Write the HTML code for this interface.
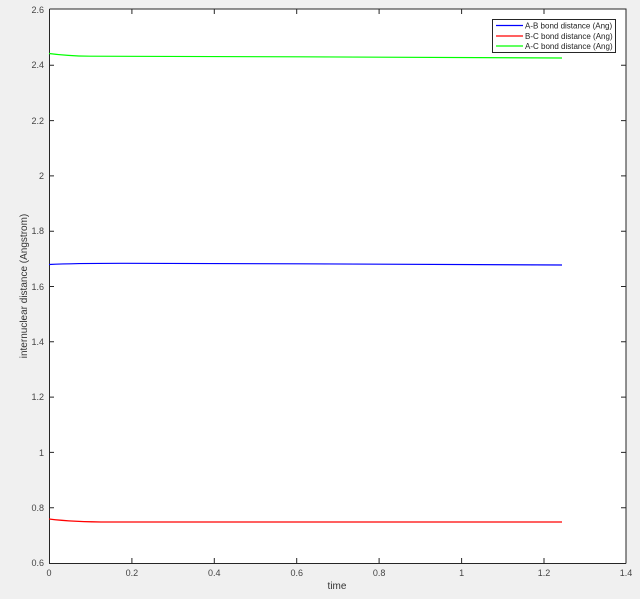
<!DOCTYPE html>
<html><head><style>body{margin:0;background:#f0f0f0;}svg{display:block;font-family:"Liberation Sans",sans-serif;}</style></head>
<body>
<svg width="640" height="599" viewBox="0 0 640 599">
<rect x="0" y="0" width="640" height="599" fill="#f0f0f0"/>
<rect x="49" y="9" width="577" height="554" fill="#fff"/>
<g stroke="#262626" stroke-width="1" fill="none">
<path d="M49.5 9v554.5H626M49.5 9H626V563.5"/>
<path d="M131.9 563v-5M214.3 563v-5M296.7 563v-5M379.1 563v-5M461.6 563v-5M544 563v-5
M131.9 9v5M214.3 9v5M296.7 9v5M379.1 9v5M461.6 9v5M544 9v5
M49 507.7h5M49 452.4h5M49 397.1h5M49 341.8h5M49 286.5h5M49 231.2h5M49 175.9h5M49 120.6h5M49 65.3h5
M626 507.7h-5M626 452.4h-5M626 397.1h-5M626 341.8h-5M626 286.5h-5M626 231.2h-5M626 175.9h-5M626 120.6h-5M626 65.3h-5"/>
</g>
<g font-size="9" fill="#444" text-anchor="end">
<text x="44" y="566">0.6</text><text x="44" y="511">0.8</text><text x="44" y="456">1</text>
<text x="44" y="400">1.2</text><text x="44" y="345">1.4</text><text x="44" y="290">1.6</text>
<text x="44" y="234">1.8</text><text x="44" y="179">2</text><text x="44" y="124">2.2</text>
<text x="44" y="68">2.4</text><text x="44" y="13">2.6</text>
</g>
<g font-size="9" fill="#444" text-anchor="middle">
<text x="49" y="576">0</text><text x="131.9" y="576">0.2</text><text x="214.3" y="576">0.4</text>
<text x="296.7" y="576">0.6</text><text x="379.1" y="576">0.8</text><text x="461.6" y="576">1</text>
<text x="544" y="576">1.2</text><text x="626" y="576">1.4</text>
<text x="337" y="589" font-size="10" fill="#333">time</text>
<text transform="translate(27,286) rotate(-90)" font-size="10" fill="#333">internuclear distance (Angstrom)</text>
</g>
<g fill="none" stroke-width="1.2">
<path d="M49 53.5 C60 55 70 56 90 56.2 L300 56.8 L562 58" stroke="#00ff00"/>
<path d="M49 264.5 C70 263.5 90 263.3 120 263.3 L300 263.8 L562 265" stroke="#0000ff"/>
<path d="M49 519 C65 521 80 522 110 522 L562 522" stroke="#ff0000"/>
</g>
<rect x="492.5" y="19.5" width="123" height="33" fill="#fff" stroke="#262626"/>
<g stroke-width="1.2"><path d="M496 25.5h27" stroke="#0000ff"/><path d="M496 36h27" stroke="#ff0000"/><path d="M496 46h27" stroke="#00ff00"/></g>
<g font-size="8" fill="#222">
<text x="525" y="28.5">A-B bond distance (Ang)</text>
<text x="525" y="39">B-C bond distance (Ang)</text>
<text x="525" y="49">A-C bond distance (Ang)</text>
</g>
</svg>
</body></html>
